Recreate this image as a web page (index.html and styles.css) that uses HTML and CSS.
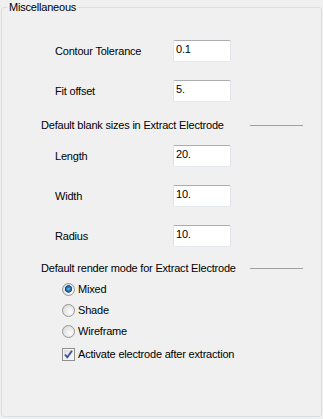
FILE: index.html
```html
<!DOCTYPE html>
<html lang="en">

<head>
    <meta charset="UTF-8">
    <title>Miscellaneous</title>
    <link rel="stylesheet" href="styles.css">
</head>

<body>
    <fieldset class="group">
        <legend>Miscellaneous</legend>
        <div class="inner">
            <div class="field first">
                <label for="tol">Contour Tolerance</label>
                <input type="text" id="tol" value="0.1">
            </div>
            <div class="field">
                <label for="fit">Fit offset</label>
                <input type="text" id="fit" value="5.">
            </div>

            <div class="section">
                <span>Default blank sizes in Extract Electrode</span>
                <span class="rule"></span>
            </div>
            <div class="field tight">
                <label for="len">Length</label>
                <input type="text" id="len" value="20.">
            </div>
            <div class="field">
                <label for="wid">Width</label>
                <input type="text" id="wid" value="10.">
            </div>
            <div class="field">
                <label for="rad">Radius</label>
                <input type="text" id="rad" value="10.">
            </div>

            <div class="section second">
                <span>Default render mode for Extract Electrode</span>
                <span class="rule"></span>
            </div>
            <div class="options">
                <label class="opt"><input type="radio" name="mode" checked> Mixed</label>
                <label class="opt"><input type="radio" name="mode"> Shade</label>
                <label class="opt"><input type="radio" name="mode"> Wireframe</label>
                <label class="opt check"><input type="checkbox" checked> Activate electrode after extraction</label>
            </div>
        </div>
    </fieldset>
</body>

</html>
```
FILE: styles.css
```css
html, body {
    margin: 0;
    padding: 0;
}

body {
    background: #f0f0f0;
    font-family: "Liberation Sans", Arial, sans-serif;
    font-size: 11px;
    letter-spacing: -0.2px;
    color: #000;
}

.group {
    box-sizing: border-box;
    height: 416px;
    margin: 1px 1px 2px 1px;
    padding: 0;
    border: 1px solid #d5dfe5;
    border-radius: 3px;
    min-width: 0;
}

.group legend {
    margin-left: 5px;
    padding: 0 2px;
    line-height: 13px;
}

.inner {
    padding: 26px 0 0 39px;
}

.field {
    display: flex;
    align-items: center;
    margin-left: 14px;
    margin-top: 18px;
}

.field.first {
    margin-top: 0;
}

.field.tight {
    margin-top: 13px;
}

.field label {
    width: 118px;
    line-height: 13px;
}

.field input {
    box-sizing: border-box;
    width: 58px;
    height: 22px;
    margin: 0;
    padding: 1px 2px 5px 2px;
    border: 1px solid #e2e3ea;
    border-top-color: #abadb3;
    border-bottom-color: #e3e9ef;
    border-radius: 2px;
    background: #fff;
    font: inherit;
    line-height: 13px;
    letter-spacing: -0.2px;
    color: #000;
    outline: none;
}

.section {
    display: flex;
    align-items: center;
    margin-top: 17px;
    padding-right: 18px;
    line-height: 13px;
}

.section.second {
    margin-top: 15px;
}

.section .rule {
    margin-left: auto;
    width: 53px;
    height: 1px;
    background: #a0a0a0;
}

.options {
    margin-top: 4px;
    padding-left: 21px;
}

.opt {
    display: flex;
    align-items: center;
    height: 21px;
    line-height: 13px;
}

.opt.check {
    margin-top: 2px;
}

.opt input {
    appearance: none;
    -webkit-appearance: none;
    box-sizing: border-box;
    width: 13px;
    height: 13px;
    margin: 0 3px 0 0;
    flex: none;
}

.opt input[type=radio] {
    border: 1px solid #969696;
    border-radius: 50%;
    background: radial-gradient(circle at 65% 65%, #fdfdfd 0%, #e6e6e6 55%, #cfcfcf 100%);
}

.opt input[type=radio]:checked {
    background:
        radial-gradient(circle at 50% 45%, #7fcaf2 0px, #2a86c8 1.5px, #174f8f 3px, #3a5f8a 3.5px, transparent 4px),
        radial-gradient(circle at 65% 65%, #fdfdfd 0%, #e6e6e6 55%, #cfcfcf 100%);
}

.opt input[type=checkbox] {
    border: 1px solid #8e8f8f;
    background: linear-gradient(135deg, #d5d5d5 0%, #ececec 50%, #fafafa 100%);
    box-shadow: inset 0 0 0 1px #f4f4f4;
}

.opt input[type=checkbox]:checked {
    background:
        url("data:image/svg+xml,%3Csvg xmlns='http://www.w3.org/2000/svg' width='11' height='11'%3E%3Cpath d='M2 5.5 L4.3 8.3 L9 1.8' fill='none' stroke='%233c4f9a' stroke-width='1.8'/%3E%3C/svg%3E") center / 11px 11px no-repeat,
        linear-gradient(135deg, #d5d5d5 0%, #ececec 50%, #fafafa 100%);
}
```
